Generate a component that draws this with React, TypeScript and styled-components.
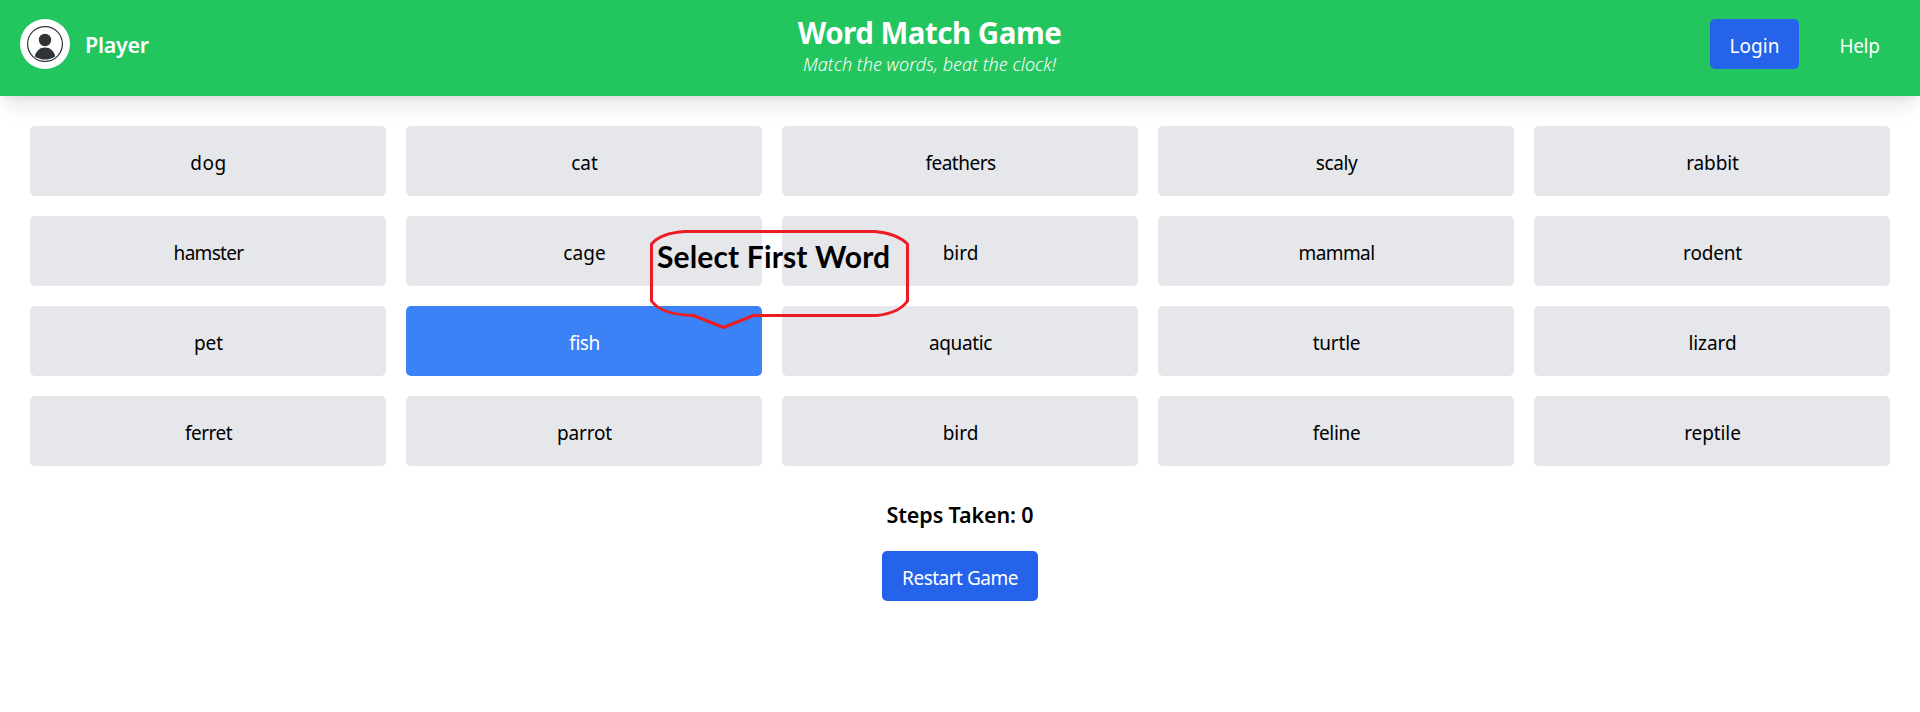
import React, { useState } from 'react';
import styled, { createGlobalStyle } from 'styled-components';

const GlobalStyle = createGlobalStyle`
  * {
    box-sizing: border-box;
  }

  body {
    margin: 0;
    background: #ffffff;
    color: #000000;
    font-family: 'Noto Sans', 'Open Sans', sans-serif;
    font-size: 19px;
  }

  h1,
  p {
    margin: 0;
  }
`;

const Page = styled.div`
  position: relative;
  min-height: 100vh;
`;

const Header = styled.header`
  display: flex;
  align-items: flex-start;
  justify-content: space-between;
  height: 96px;
  padding: 19px 20px 0;
  background: #22c55e;
  color: #ffffff;
  box-shadow:
    0 12.5px 18.75px -3.75px rgba(0, 0, 0, 0.1),
    0 5px 7.5px -5px rgba(0, 0, 0, 0.1);
`;

const Profile = styled.div`
  display: flex;
  align-items: center;
  gap: 15px;
  width: 129px;
`;

const Avatar = styled.svg`
  flex: none;
  width: 50px;
  height: 50px;
`;

const PlayerName = styled.span`
  padding-top: 1px;
  font-size: 21.5px;
  font-weight: 600;
  line-height: 35px;
  letter-spacing: -0.3px;
`;

const Heading = styled.div`
  margin-top: -4px;
  text-align: center;
  white-space: nowrap;
`;

const Title = styled.h1`
  font-size: 29.5px;
  font-weight: 700;
  line-height: 36px;
  letter-spacing: -0.5px;
`;

const Subtitle = styled.p`
  font-size: 18px;
  font-style: italic;
  font-weight: 300;
  line-height: 27px;
  letter-spacing: 0.05px;
`;

const Actions = styled.div`
  display: flex;
  gap: 20px;
  width: 190px;
`;

const Button = styled.button<{ $ghost?: boolean; $width: number; $tracking?: number }>`
  flex: none;
  width: ${({ $width }) => $width}px;
  height: 50px;
  padding: 3px 0 0;
  border: 0;
  border-radius: 5px;
  background: ${({ $ghost }) => ($ghost ? 'transparent' : '#2563eb')};
  color: #ffffff;
  font: inherit;
  letter-spacing: ${({ $tracking = 0 }) => $tracking}px;
  white-space: nowrap;
  cursor: pointer;
`;

const Board = styled.main`
  display: grid;
  grid-template-columns: repeat(5, 1fr);
  gap: 20px;
  padding: 30px 30px 0;
`;

const Card = styled.button<{ $selected: boolean; $tracking: number }>`
  height: 70px;
  padding: 3px 0 0 1px;
  border: 0;
  border-radius: 5px;
  background: ${({ $selected }) => ($selected ? '#3b82f6' : '#e5e7eb')};
  color: ${({ $selected }) => ($selected ? '#ffffff' : '#000000')};
  font: inherit;
  letter-spacing: ${({ $tracking }) => $tracking}px;
  cursor: pointer;
`;

const Footer = styled.footer`
  display: flex;
  flex-direction: column;
  align-items: center;
  gap: 19px;
  padding-top: 31px;
`;

const Steps = styled.p`
  font-size: 21.5px;
  font-weight: 600;
  line-height: 35px;
  letter-spacing: -0.12px;
`;

const Callout = styled.div`
  position: absolute;
  left: 650px;
  top: 229px;
  width: 260px;
  height: 102px;
  pointer-events: none;
`;

const Bubble = styled.svg`
  position: absolute;
  inset: 0;
`;

const CalloutText = styled.div`
  padding: 10px 0 0 7px;
  font-family: Lato, sans-serif;
  font-size: 30px;
  font-weight: 700;
  line-height: 35px;
  letter-spacing: 0.15px;
  white-space: nowrap;
`;

const words = [
  { text: 'dog', tracking: 0.6 },
  { text: 'cat', tracking: 0 },
  { text: 'feathers', tracking: -0.5 },
  { text: 'scaly', tracking: -0.4 },
  { text: 'rabbit', tracking: -0.1 },
  { text: 'hamster', tracking: -0.7 },
  { text: 'cage', tracking: 0.1 },
  { text: 'bird', tracking: 0 },
  { text: 'mammal', tracking: -0.6 },
  { text: 'rodent', tracking: -0.2 },
  { text: 'pet', tracking: -0.1 },
  { text: 'fish', tracking: -0.5 },
  { text: 'aquatic', tracking: -0.35 },
  { text: 'turtle', tracking: -0.2 },
  { text: 'lizard', tracking: -0.1 },
  { text: 'ferret', tracking: -0.5 },
  { text: 'parrot', tracking: -0.2 },
  { text: 'bird', tracking: 0 },
  { text: 'feline', tracking: -0.3 },
  { text: 'reptile', tracking: -0.1 },
];

const FIRST_PICK = 11;

export default function App() {
  const [selected, setSelected] = useState(FIRST_PICK);

  return (
    <Page>
      <GlobalStyle />
      <Header>
        <Profile>
          <Avatar viewBox="0 0 50 50" aria-hidden="true">
            <circle cx="25" cy="25" r="25" fill="#fff" />
            <circle cx="25" cy="25" r="17.4" fill="none" stroke="#303439" strokeWidth="1.2" />
            <circle cx="25" cy="21" r="6.2" fill="#303439" />
            <path d="M14.8 37.4C16 32 20 28.6 25 28.6S34 32 35.2 37.4C29.5 41.5 20.5 41.5 14.8 37.4Z" fill="#303439" />
          </Avatar>
          <PlayerName>Player</PlayerName>
        </Profile>
        <Heading>
          <Title>Word Match Game</Title>
          <Subtitle>Match the words, beat the clock!</Subtitle>
        </Heading>
        <Actions>
          <Button $width={89}>Login</Button>
          <Button $ghost $width={81} $tracking={-0.3}>Help</Button>
        </Actions>
      </Header>
      <Board>
        {words.map((word, index) => (
          <Card
            key={index}
            $selected={index === selected}
            $tracking={word.tracking}
            onClick={() => setSelected(index)}
          >
            {word.text}
          </Card>
        ))}
      </Board>
      <Footer>
        <Steps>Steps Taken: 0</Steps>
        <Button $width={156} $tracking={-0.5} onClick={() => setSelected(FIRST_PICK)}>
          Restart Game
        </Button>
      </Footer>
      <Callout>
        <Bubble width="260" height="102" viewBox="0 0 260 102" fill="none" stroke="#ed1c24" strokeWidth="3">
          <path d="M35 2.5H225Q247 4.500 257.500 15V72Q249 84 227 86.500H103.500L73.500 98.500L43.500 86.500Q11 85.500 1.500 72V15Q11 4 35 2.500Z" strokeLinejoin="round" />
        </Bubble>
        <CalloutText>Select First Word</CalloutText>
      </Callout>
    </Page>
  );
}
